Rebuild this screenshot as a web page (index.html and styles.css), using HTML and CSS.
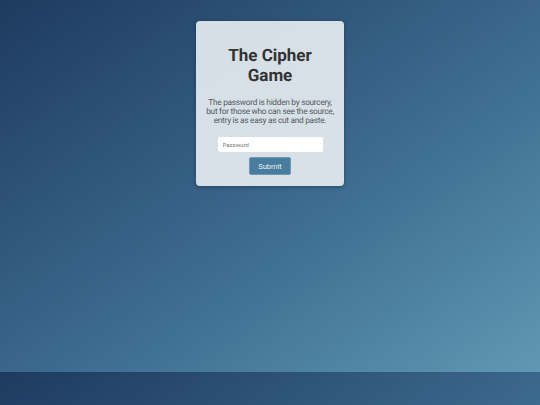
FILE: index.html
```html
<!DOCTYPE html>
<html>
<head>
<meta charset="utf-8">
<link rel="stylesheet" href="styles.css">
</head>
<body>
<div class="page">
  <div class="card">
    <h1 class="title">The Cipher Game</h1>
    <p class="text">The password is hidden by sourcery, but for those who can see the source, entry is as easy as cut and paste.</p>
    <form class="form">
      <input class="field" type="password" placeholder="Password">
      <button class="btn" type="button">Submit</button>
    </form>
  </div>
</div>
</body>
</html>
```
FILE: styles.css
```css
html {
  background: linear-gradient(to bottom right, #1e3a5f 0%, #3f6f93 60%, #6098b2 100%);
  background-size: 100% 372px;
  background-repeat: repeat;
  min-height: 100%;
}
body {
  margin: 0;
  font-family: Roboto, "Liberation Sans", sans-serif;
  text-rendering: geometricPrecision;
}
.page {
  height: 372px;
  display: flex;
  justify-content: center;
  align-items: flex-start;
  padding-top: 21px;
  box-sizing: border-box;
}
.card {
  width: 148px;
  height: 165px;
  box-sizing: border-box;
  background: rgba(230, 236, 240, 0.92);
  border-radius: 4px;
  box-shadow: 0 1px 4px rgba(0, 0, 0, 0.3);
  padding: 25px 6px 11px;
  display: flex;
  flex-direction: column;
  align-items: center;
  text-align: center;
}
.title {
  margin: 0;
  font-size: 17px;
  line-height: 20px;
  font-weight: 700;
  color: #333;
  width: 110px;
}
.text {
  margin: 13px 0 0;
  font-size: 8.3px;
  line-height: 9px;
  color: #555a5e;
  letter-spacing: -0.28px;
}
.form {
  margin-top: 11px;
  display: flex;
  flex-direction: column;
  align-items: center;
  gap: 5px;
}
.field {
  width: 105px;
  height: 15px;
  box-sizing: border-box;
  border: none;
  border-radius: 2px;
  background: #fff;
  padding: 0 5px;
  font-family: Roboto, "Liberation Sans", sans-serif;
  font-size: 6px;
  color: #333;
  outline: none;
}
.field::placeholder {
  color: #777;
}
.btn {
  width: 42px;
  height: 18px;
  box-sizing: border-box;
  background: #4a7c9d;
  border: 1px solid #6b9ab7;
  border-radius: 2px;
  color: #e8f0f5;
  font-family: Roboto, "Liberation Sans", sans-serif;
  font-size: 7.5px;
  padding: 0;
}
```
